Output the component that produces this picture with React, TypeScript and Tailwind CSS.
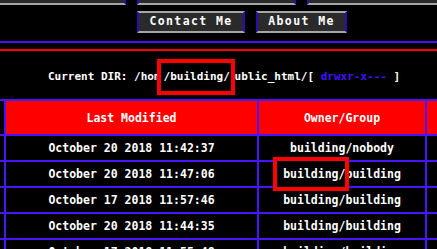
import React from 'react';

const rows = [
  { date: 'October 20 2018 11:42:37', owner: 'building/nobody' },
  { date: 'October 20 2018 11:47:06', owner: 'building/building', mark: true },
  { date: 'October 17 2018 11:57:46', owner: 'building/building' },
  { date: 'October 20 2018 11:44:35', owner: 'building/building' },
  { date: 'October 17 2018 11:55:48', owner: 'building/building' },
];

const NavButton = ({ label, w }: { label?: string; w: string }) => (
  <div
    className={`${w} h-[22px] shrink-0 flex items-center justify-center bg-[#2a2a2a] border-y-2 border-y-[#a6a6a6] border-x-2 border-x-[#2c0cb0] text-white font-bold text-[11.5px] tracking-[1.4px]`}
  >
    {label}
  </div>
);

const App: React.FC = () => {
  return (
    <div className="w-[437px] h-[249px] overflow-hidden bg-black font-['DejaVu_Sans_Mono',monospace]">
      {/* menu - first row is scrolled mostly out of view */}
      <div className="flex gap-[11px] ml-[-20px] mt-[-17px]">
        <NavButton w="w-[146px]" />
        <NavButton w="w-[159px]" />
        <NavButton w="w-[150px]" />
      </div>
      <div className="flex gap-[11px] pl-[137px] mt-[6px]">
        <NavButton w="w-[108px]" label="Contact Me" />
        <NavButton w="w-[91px]" label="About Me" />
      </div>

      <div className="h-[2px] bg-[#4a0cff] mt-[8px]" />
      <div className="h-[2px] bg-[#ff0000] mt-[6px]" />

      {/* current dir */}
      <div className="h-[48px] flex items-center pl-[48px] pt-[4px] text-[11px] font-bold text-white whitespace-pre leading-[14px]">
        <span>Current DIR: /hom</span>
        <span className="inline-block -my-[11px] -ml-[4px] w-[78px] h-[36px] border-4 border-[#ff0000] bg-black pl-[3px] leading-[28px]">
          /building/
        </span>
        <span>
          ublic_html/[ <span className="text-[#4010ff]">drwxr-x---</span> ]
        </span>
      </div>

      {/* file table */}
      <div className="grid grid-cols-[60px_251px_166px_120px] gap-[2px] bg-[#4a14ff] pt-[2px] ml-[-56px] w-max text-[11.5px] font-bold text-white leading-[14px]">
        <div className="h-[33px] bg-black" />
        <div className="h-[33px] bg-[#ff0000] flex items-center justify-center">Last Modified</div>
        <div className="h-[33px] bg-[#ff0000] flex items-center justify-center">Owner/Group</div>
        <div className="h-[33px] bg-[#ff0000]" />

        {rows.map((r) => (
          <React.Fragment key={r.date}>
            <div className="h-[24px] bg-black" />
            <div className="h-[24px] bg-black flex items-center justify-center">{r.date}</div>
            <div className="h-[24px] bg-black flex items-center justify-center">
              <span className="relative">
                {r.owner}
                {r.mark && (
                  <span className="absolute z-10 left-[-10px] top-[-10px] w-[76px] h-[34px] border-4 border-[#ff0000] bg-black pl-[6px] pt-[6px] text-left">
                    building/
                  </span>
                )}
              </span>
            </div>
            <div className="h-[24px] bg-black" />
          </React.Fragment>
        ))}
      </div>
    </div>
  );
};

export default App;
